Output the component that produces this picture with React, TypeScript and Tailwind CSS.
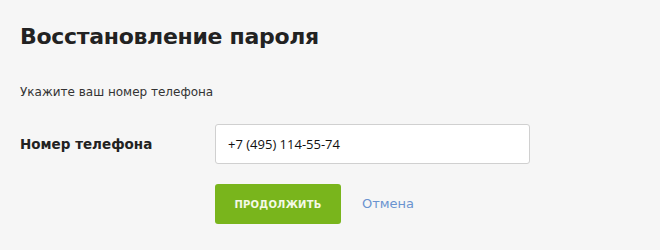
export default function App() {
  return (
    <div className="min-h-[250px] w-full bg-[#f6f6f6] px-5 pt-[21px] font-['DejaVu_Sans',sans-serif] text-[#222]">
      <h1 className="text-[22px] font-bold leading-[32px] tracking-[-0.3px]">Восстановление пароля</h1>

      <p className="mt-[30px] text-[12px] leading-[18px] text-[#333]">Укажите ваш номер телефона</p>

      <div className="mt-[23px] flex items-center">
        <label className="w-[195px] text-[13.5px] font-bold text-[#222]">Номер телефона</label>
        <input
          type="text"
          defaultValue="+7 (495) 114-55-74"
          className="h-[40px] w-[315px] rounded-[3px] border border-[#d0d0d0] bg-white px-3 font-['Open_Sans',sans-serif] text-[13px] text-[#111] outline-none"
        />
      </div>

      <div className="mt-[20px] flex items-center pl-[195px]">
        <button className="h-[40px] w-[126px] rounded-[3px] bg-[#79b51c] text-[10px] font-bold tracking-[0.2px] text-[#f4f9e6]">
          ПРОДОЛЖИТЬ
        </button>
        <a href="#" className="ml-[21px] text-[13px] text-[#6a93d0]">Отмена</a>
      </div>
    </div>
  );
}
